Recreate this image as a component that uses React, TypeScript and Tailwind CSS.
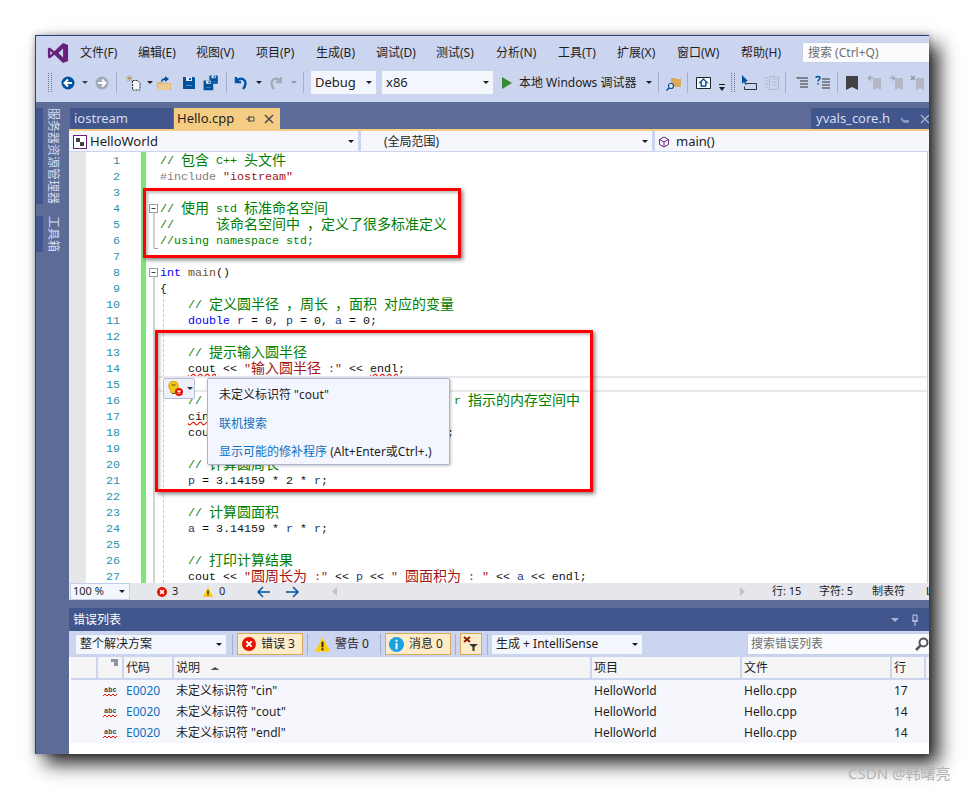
import React from "react"

const sans = "font-['Noto_Sans','Noto_Sans_CJK_SC',sans-serif]"

const C = "text-[#008000]"
const G = "text-[#808080]"
const S = "text-[#a31515]"
const K = "text-[#0000ff]"
const F = "text-[#74531f]"
const V = "text-[#1f377f]"
const N = "text-[#111111]"
const U = "text-[#111111] underline decoration-wavy decoration-[#e51400] underline-offset-[1px]"

type Seg = [string, string]

const lines: Seg[][] = [
  [[C, "// 包含 C++ 头文件"]],
  [[G, "#include "], [S, "\"iostream\""]],
  [],
  [[C, "// 使用 std 标准命名空间"]],
  [[C, "//      该命名空间中 ，定义了很多标准定义"]],
  [[C, "//using namespace std;"]],
  [],
  [[K, "int"], [N, " "], [F, "main"], [N, "()"]],
  [[N, "{"]],
  [[C, "    // 定义圆半径 ，周长 ，面积 对应的变量"]],
  [[K, "    double"], [N, " "], [V, "r"], [N, " = 0, "], [V, "p"], [N, " = 0, "], [V, "a"], [N, " = 0;"]],
  [],
  [[C, "    // 提示输入圆半径"]],
  [[N, "    "], [U, "cout"], [N, " << "], [S, "\"输入圆半径 :\""], [N, " << "], [U, "endl"], [N, ";"]],
  [],
  [[C, "    // 从键盘读取一个圆半径数据  ，存放到 r 指示的内存空间中"]],
  [[N, "    "], [U, "cin"], [N, " >> "], [V, "r"], [N, ";"]],
  [[N, "    cout << "], [S, "\"圆半径值为  : \""], [N, " << "], [V, "r"], [N, " << endl;"]],
  [],
  [[C, "    // 计算圆周长"]],
  [[V, "    p"], [N, " = 3.14159 * 2 * "], [V, "r"], [N, ";"]],
  [],
  [[C, "    // 计算圆面积"]],
  [[V, "    a"], [N, " = 3.14159 * "], [V, "r"], [N, " * "], [V, "r"], [N, ";"]],
  [],
  [[C, "    // 打印计算结果"]],
  [[N, "    cout << "], [S, "\"圆周长为 :\""], [N, " << "], [V, "p"], [N, " << "], [S, "\" 圆面积为 : \""], [N, " << "], [V, "a"], [N, " << endl;"]],
]

// cjk runs sit on a 14px grid, latin on a 7px grid
function CodeText({ text, cls }: { text: string; cls: string }) {
  const parts = text.split(/([\u4e00-\u9fff，]+)/)
  return (
    <span className={cls}>
      {parts.map((p, i) =>
        i % 2 === 1 ? (
          <span key={i} className="relative top-px text-[14px] leading-[0] font-['Noto_Sans_CJK_SC',sans-serif]">{p}</span>
        ) : (
          <span key={i}>{p}</span>
        ),
      )}
    </span>
  )
}

function Caret({ className = "", color = "#1e1e1e" }: { className?: string; color?: string }) {
  return (
    <svg width="6" height="3" viewBox="0 0 6 3" className={"shrink-0 " + className}>
      <path d="M0 0h6L3 3z" fill={color} />
    </svg>
  )
}

function Sep({ className = "" }: { className?: string }) {
  return <div className={"w-px h-[21px] shrink-0 bg-[#a4afcc] " + className} />
}

function Grip({ className = "" }: { className?: string }) {
  return <div className={"w-[4px] h-[19px] shrink-0 border-x border-dotted border-[#6b7690] " + className} />
}

function Ico({ className = "", children }: { className?: string; children: React.ReactNode }) {
  return (
    <svg width="16" height="16" viewBox="0 0 16 16" className={"shrink-0 " + className}>
      {children}
    </svg>
  )
}

function RoundArrow({ dir, fill, className }: { dir: "l" | "r"; fill: string; className?: string }) {
  return (
    <Ico className={className}>
      <circle cx="8" cy="8" r="6.5" fill={fill} />
      <path
        d={dir === "l" ? "M8 4.5 4.5 8 8 11.5M5 8h7" : "M8 4.5 11.5 8 8 11.5M11 8H4"}
        stroke="#fff"
        strokeWidth="2"
        fill="none"
      />
    </Ico>
  )
}

function Disk({ x = 0, y = 0, s = 1 }: { x?: number; y?: number; s?: number }) {
  return (
    <g transform={`translate(${x} ${y}) scale(${s})`}>
      <path d="M2 2h11l1 1v11H2z" fill="#00539c" />
      <path d="M5 2h6v4H5z" fill="#dfe5f6" />
      <path d="M8 3h2v2H8z" fill="#00539c" />
      <path d="M5 10h6v1H5z" fill="#5d8cbd" />
    </g>
  )
}

function Combo({ text, className, font = "text-[13px]" }: { text: string; className: string; font?: string }) {
  return (
    <div className={"flex items-center justify-between bg-[#f3f6fd] shrink-0 " + className}>
      <span className={"text-[#1e1e1e] truncate " + font}>{text}</span>
      <Caret />
    </div>
  )
}

function ErrIcon({ size = 14, className = "" }: { size?: number; className?: string }) {
  return (
    <svg width={size} height={size} viewBox="0 0 16 16" className={"shrink-0 " + className}>
      <circle cx="8" cy="8" r="8" fill="#e51400" />
      <path d="M5 5l6 6M11 5l-6 6" stroke="#fff" strokeWidth="2.4" />
    </svg>
  )
}

function WarnIcon({ size = 14, className = "" }: { size?: number; className?: string }) {
  return (
    <svg width={size} height={size} viewBox="0 0 16 16" className={"shrink-0 " + className}>
      <path d="M8 .5 16 15.5H0z" fill="#ffcc00" />
      <path d="M7 5h2v6H7zM7 12h2v2H7z" fill="#1e1e1e" />
    </svg>
  )
}

function MenuBar() {
  const items: [string, string][] = [
    ["文件(F)", "w-[58px]"],
    ["编辑(E)", "w-[58px]"],
    ["视图(V)", "w-[60px]"],
    ["项目(P)", "w-[60px]"],
    ["生成(B)", "w-[60px]"],
    ["调试(D)", "w-[60px]"],
    ["测试(S)", "w-[60px]"],
    ["分析(N)", "w-[62px]"],
    ["工具(T)", "w-[59px]"],
    ["扩展(X)", "w-[60px]"],
    ["窗口(W)", "w-[64px]"],
    ["帮助(H)", "w-[61px]"],
  ]
  return (
    <div className="h-[32px] flex items-center shrink-0 pt-px">
      <svg width="22" height="22" viewBox="0 0 24 24" className="ml-[11px] mr-[11px] shrink-0">
        <path d="M17.5 1 23 3.4v17.2L17.5 23 8 14l-5 4-2-1.2V7.2L3 6l5 4zM17.5 7l-5 5 5 5zM3.5 9.500v5l2.500-2.500z" fill="#68217a" fillRule="evenodd" />
      </svg>
      {items.map(([t, w]) => (
        <div key={t} className={"text-[12px] text-[#1e1e1e] shrink-0 " + w}>{t}</div>
      ))}
      <div className="flex-1 h-[21px] bg-[#fbfcfe] border border-[#c8d0e6] border-r-0 pl-[5px] flex items-center text-[12px] text-[#6d6d6d] whitespace-nowrap overflow-hidden">
        搜索 (Ctrl+Q)
      </div>
    </div>
  )
}

function ToolBar() {
  return (
    <div className="h-[34px] flex items-center shrink-0 pl-[12px] pb-[5px] overflow-hidden">
      <Grip />
      <RoundArrow dir="l" fill="#00539c" className="ml-[8px]" />
      <Caret className="ml-[6px]" color="#444" />
      <RoundArrow dir="r" fill="#a3a9b8" className="ml-[6px]" />
      <Sep className="ml-[6px]" />
      <Ico className="ml-[9px]">
        <path d="M6.500 5.500h5l2.500 2.500v7H6.500z" fill="#f3f5fb" stroke="#333" strokeDasharray="2 1" />
        <path d="M3.500 0v7M0 3.500h7M1 1l5 5M6 1 1 6" stroke="#b9801f" strokeWidth="1" strokeDasharray="1 .7" />
      </Ico>
      <Caret className="ml-[5px]" />
      <Ico className="ml-[3px]">
        <path d="M1 7h5l1 1h8v7H1z" fill="#dcb67a" />
        <path d="M3 9h12l-2 6H1z" fill="#eccb94" />
        <path d="M5 7c0-3 2-4 4-4V1l4 3-4 3V5C7 5 6 6 6 7z" fill="#00539c" />
      </Ico>
      <Ico className="ml-[9px]"><Disk /></Ico>
      <Ico className="ml-[6px]">
        <Disk x={5} y={-1} s={0.7} />
        <Disk x={-1} y={4} s={0.8} />
      </Ico>
      <Sep className="ml-[7px]" />
      <Ico className="ml-[6px]">
        <path d="M3 2v5h5M3.500 6.500C5 4 8 3 10.500 4.500 13 6 13.500 10 10 14" stroke="#00539c" strokeWidth="2.400" fill="none" />
      </Ico>
      <Caret className="ml-[7px]" />
      <Ico className="ml-[6px]">
        <path d="M13 2v5H8M12.500 6.500C11 4 8 3 5.500 4.500 3 6 2.500 10 6 14" stroke="#a3a9b8" strokeWidth="2.400" fill="none" />
      </Ico>
      <Caret className="ml-[7px]" color="#8f96a8" />
      <Sep className="ml-[6px]" />
      <Combo text="Debug" className="ml-[7px] w-[65px] h-[23px] px-[4px]" />
      <Combo text="x86" className="ml-[6px] w-[111px] h-[23px] px-[4px]" />
      <svg width="10" height="12" viewBox="0 0 10 12" className="ml-[9px] shrink-0">
        <path d="M0 0l10 6-10 6z" fill="#388a34" />
      </svg>
      <div className="ml-[7px] w-[121px] shrink-0 text-[12px] text-[#1e1e1e] whitespace-nowrap">本地 Windows 调试器</div>
      <Caret className="ml-[6px]" />
      <Sep className="ml-[6px]" />
      <Ico className="ml-[7px]">
        <path d="M5 3h4l1 1h5v8H5z" fill="#d9a95c" />
        <circle cx="5" cy="11" r="2.500" fill="#e8ecf8" stroke="#00539c" strokeWidth="1.200" />
        <path d="M3 13l-2.500 2.500" stroke="#00539c" strokeWidth="1.500" />
      </Ico>
      <Sep className="ml-[5px]" />
      <Ico className="ml-[8px]">
        <path d="M.5 2.500h14v11H.5z" fill="#f5f7fd" stroke="#222" />
        <path d="M7.500 4 4 7.500h1.200V11h4.600V7.500H11z" fill="none" stroke="#00539c" strokeWidth="1.300" />
      </Ico>
      <svg width="6" height="7" viewBox="0 0 6 7" className="ml-[7px] mt-[10px] shrink-0">
        <path d="M0 0h6v1H0zM0 3h6L3 7z" fill="#1e1e1e" />
      </svg>
      <Grip className="ml-[6px]" />
      <Ico className="ml-[6px]">
        <path d="M1 0v9l2-2 1.500 3L6 9.300 4.500 6.500 7 6z" fill="#00539c" />
        <path d="M5.500 8.500h10v6h-12v-3" fill="none" stroke="#333" />
      </Ico>
      <Ico className="ml-[7px]">
        <path d="M1 3h3M1 6h3M1 9h3M1 12h3" stroke="#b3b8c4" />
        <path d="M5.500 1.500h9v13h-9zM8 4h5M8 7h5M8 10h5" fill="none" stroke="#b3b8c4" />
      </Ico>
      <Sep className="ml-[5px]" />
      <Ico className="ml-[8px]">
        <path d="M3 3h11M6 6h8M6 9h8M6 12h8" stroke="#333" />
        <path d="M2 2h3l-1 2z" fill="#388a34" />
      </Ico>
      <Ico className="ml-[5px]">
        <path d="M7 4h8M7 7h8M7 10h8M7 13h8" stroke="#333" />
        <path d="M1 3c0-2 4-2 4 0 0 1.500-2 1.500-2 3.500M3 8v1.500" stroke="#00539c" strokeWidth="1.500" fill="none" />
      </Ico>
      <Sep className="ml-[6px]" />
      <Ico className="ml-[6px]"><path d="M2 1h12v14l-6-3-6 3z" fill="#424242" /></Ico>
      <Ico className="ml-[7px]">
        <path d="M6 3h8v12l-4-2-4 2z" fill="#b3b8c4" />
        <path d="M1 3h5M1 3l3-2.500M1 3l3 2.500" stroke="#8f96a8" fill="none" />
      </Ico>
      <Ico className="ml-[6px]">
        <path d="M6 3h8v12l-4-2-4 2z" fill="#b3b8c4" />
        <path d="M1 3h5M6 3 3 .5M6 3 3 5.500" stroke="#8f96a8" fill="none" />
      </Ico>
      <Ico className="ml-[5px]">
        <path d="M6 3h8v12l-4-2-4 2z" fill="#b3b8c4" />
        <path d="M1 1l4 4M5 1 1 5" stroke="#8f96a8" strokeWidth="1.500" />
      </Ico>
    </div>
  )
}

function TabStrip() {
  return (
    <div className="h-[29px] pt-[6px] flex shrink-0 border-b-2 border-[#f5cc84] ml-[33px]">
      <div className="w-[103px] ml-px bg-[#40568d] text-[#d5dcef] text-[13px] pl-[4px] leading-[21px] shrink-0">iostream</div>
      <div className="w-[106px] ml-px bg-[#f5cc84] text-[#1e1e1e] text-[13px] pl-[3px] leading-[21px] shrink-0 flex items-center">
        <span>Hello.cpp</span>
        <svg width="10" height="10" viewBox="0 0 10 10" className="ml-[12px] shrink-0">
          <path d="M0 5h3M3 2v6M3 3h5v4H3z" stroke="#4a4a4a" fill="none" />
        </svg>
        <svg width="10" height="10" viewBox="0 0 10 10" className="ml-[8px] shrink-0">
          <path d="M1 1l8 8M9 1 1 9" stroke="#4a4a4a" strokeWidth="1.500" />
        </svg>
      </div>
      <div className="flex-1" />
      <div className="w-[118px] bg-[#40568d] text-[#d5dcef] text-[13px] pl-[5px] leading-[21px] shrink-0 flex items-center">
        <span>yvals_core.h</span>
        <svg width="10" height="10" viewBox="0 0 10 10" className="ml-[10px] shrink-0">
          <path d="M1 3l3 3h5v3H4L1 6z" fill="#8b97b8" />
        </svg>
        <svg width="10" height="10" viewBox="0 0 10 10" className="ml-[10px] shrink-0">
          <path d="M1 1l8 8M9 1 1 9" stroke="#a9b4d0" strokeWidth="1.300" />
        </svg>
      </div>
    </div>
  )
}

function NavBar() {
  return (
    <div className="h-[21px] flex shrink-0 bg-[#ccd5f0] border-b border-[#ccd5f0] text-[#1e1e1e] text-[12px]">
      <div className="w-[289px] bg-[#f5f7fd] flex items-center pl-[4px] pr-[3px] pt-px">
        <svg width="14" height="14" viewBox="0 0 14 14" className="shrink-0">
          <rect x=".5" y=".5" width="13" height="13" fill="#fff" stroke="#68217a" />
          <path d="M3 3h4v4H3zM7 7h4v4H7z" fill="#424242" />
        </svg>
        <span className="ml-[3px] text-[13px]">HelloWorld</span>
        <Caret className="ml-auto mr-[1px]" />
      </div>
      <div className="w-[291px] ml-[3px] bg-[#f5f7fd] flex items-center pl-[23px] pr-[3px] pt-px">
        <span>(全局范围)</span>
        <Caret className="ml-auto mr-[1px]" />
      </div>
      <div className="flex-1 ml-[3px] bg-[#f5f7fd] flex items-center pl-[3px] pt-px">
        <svg width="12" height="12" viewBox="0 0 12 12" className="shrink-0">
          <path d="M6 1l4.500 2.500v5L6 11 1.500 8.500v-5zM1.500 3.500 6 6l4.500-2.500M6 6v5" fill="none" stroke="#68217a" />
        </svg>
        <span className="ml-[6px] text-[13px]">main()</span>
      </div>
    </div>
  )
}

function Editor() {
  return (
    <div className="h-[431px] flex shrink-0 overflow-hidden bg-white font-['Liberation_Mono','Noto_Sans_CJK_SC',monospace] text-[11.67px] leading-[16px]">
      <div className="w-[17px] bg-[#e6e7e8] shrink-0" />
      <div className="w-[34px] shrink-0 text-right text-[#2b91af]">
        {lines.map((_, i) => (
          <div key={i} className="h-[16px] pt-px">{i + 1}</div>
        ))}
      </div>
      <div className="w-[5px] ml-[21px] bg-[#78e678] shrink-0" />
      <svg width="13" height="431" viewBox="0 0 13 431" className="shrink-0">
        <g fill="#fff" stroke="#9a9a9a">
          <rect x="3.500" y="52.500" width="8" height="8" />
          <rect x="3.500" y="116.500" width="8" height="8" />
        </g>
        <path d="M5.500 56.500h4M5.500 120.500h4" stroke="#444" />
        <path d="M8 61v35.500h4M8 125v306" fill="none" stroke="#a5a5a5" />
      </svg>
      <div className="flex-1 relative pl-px whitespace-pre">
        <div className="absolute left-[4px] top-[142px] bottom-0 border-l border-dashed border-[#c8c8c8]" />
        {lines.map((segs, i) => (
          <div
            key={i}
            className={"h-[16px] relative " + (i === 14 ? "border-y-2 border-[#e8e8ec] -ml-px" : "pt-px")}
          >
            {segs.map(([cls, text], j) => (
              <CodeText key={j} cls={cls} text={text} />
            ))}
          </div>
        ))}
        <div className={"absolute left-[4px] top-[226px] w-[32px] h-[21px] bg-[#eef1fb] border border-[#b4bfdb] rounded-[2px] flex items-center pl-[3px] " + sans}>
          <svg width="17" height="17" viewBox="0 0 17 17" className="shrink-0">
            <path d="M6.500 1a5 5 0 0 1 3 9v2.500h-6V10a5 5 0 0 1 3-9z" fill="#f3c316" stroke="#c79a0a" strokeWidth=".6" />
            <path d="M4.500 5h4M5 13.500h3" stroke="#6b5a10" />
            <circle cx="12" cy="12" r="4" fill="#e51400" />
            <path d="M10.500 10.500l3 3M13.500 10.500l-3 3" stroke="#fff" strokeWidth="1.200" />
          </svg>
          <Caret className="ml-[3px]" color="#333" />
        </div>
        <div className={"absolute left-[48px] top-[226px] w-[243px] h-[87px] bg-[#f3f6fe] border border-[#a9b5d3] rounded-[2px] shadow-[1px_1px_3px_rgba(0,0,0,0.25)] pl-[11px] text-[12px] text-[#1e1e1e] leading-[16px] whitespace-nowrap " + sans}>
          <div className="mt-[8px]">未定义标识符 "cout"</div>
          <div className="mt-[13px] text-[#0e70c0]">联机搜索</div>
          <div className="mt-[12px]">
            <span className="text-[#0e70c0]">显示可能的修补程序</span> (Alt+Enter或Ctrl+.)
          </div>
        </div>
      </div>
      <div className="w-[2px] shrink-0 border-l border-[#c4c7d0] bg-[#f0f0f3]" />
    </div>
  )
}

function StatusBar() {
  return (
    <div className="h-[17px] flex items-center shrink-0 bg-[#e6e7ed] text-[11px] text-[#1e1e1e] whitespace-nowrap overflow-hidden">
      <div className="w-[60px] h-[17px] ml-px bg-[#f3f6fd] border border-[#c5cfea] flex items-center justify-between pl-[2px] pr-[4px] shrink-0 text-[11px]">
        <span>100 %</span>
        <Caret />
      </div>
      <ErrIcon size={10} className="ml-[27px]" />
      <span className="ml-[5px] w-[6px]">3</span>
      <WarnIcon size={10} className="ml-[25px]" />
      <span className="ml-[6px] w-[6px]">0</span>
      <svg width="14" height="12" viewBox="0 0 14 12" className="ml-[32px] shrink-0">
        <path d="M6 1 1 6l5 5M1 6h12" stroke="#00539c" strokeWidth="1.500" fill="none" />
      </svg>
      <svg width="14" height="12" viewBox="0 0 14 12" className="ml-[14px] shrink-0">
        <path d="M8 1l5 5-5 5M13 6H1" stroke="#00539c" strokeWidth="1.500" fill="none" />
      </svg>
      <svg width="5" height="9" viewBox="0 0 5 9" className="ml-[33px] shrink-0">
        <path d="M5 0v9L0 4.500z" fill="#c2c3c9" />
      </svg>
      <svg width="5" height="9" viewBox="0 0 5 9" className="ml-[403px] shrink-0">
        <path d="M0 0v9l5-4.500z" fill="#c2c3c9" />
      </svg>
      <span className="ml-[27px] w-[47px] shrink-0">行: 15</span>
      <span className="w-[53px] shrink-0">字符: 5</span>
      <span className="w-[54px] shrink-0">制表符</span>
      <span>L</span>
    </div>
  )
}

function ErrorList() {
  const rows = [
    ["cin", "17"],
    ["cout", "14"],
    ["endl", "14"],
  ]
  return (
    <div className="flex-1 flex flex-col bg-white text-[12px] text-[#1e1e1e] min-h-0">
      <div className="h-[8px] bg-[#5d6b99] shrink-0" />
      <div className="h-[23px] bg-[#40568d] shrink-0 flex items-center pl-[4px] text-white text-[12px]">
        <span>错误列表</span>
        <svg width="8" height="4" viewBox="0 0 8 4" className="ml-auto shrink-0">
          <path d="M0 0h8L4 4z" fill="#a9b6d6" />
        </svg>
        <svg width="8" height="12" viewBox="0 0 8 12" className="ml-[12px] mr-[10px] shrink-0">
          <path d="M2 1h4v6H2zM1 7h6M4 7v5" stroke="#c9d2e8" fill="none" />
        </svg>
      </div>
      <div className="h-[26px] bg-[#ccd5f0] shrink-0 flex items-center pl-[7px] whitespace-nowrap">
        <Combo text="整个解决方案" className="w-[150px] h-[19px] px-[4px]" font="text-[12px]" />
        <Sep className="ml-[6px]" />
        <div className="ml-[4px] w-[66px] h-[22px] bg-[#fdecc9] border border-[#d9a85f] flex items-center pl-[4px] shrink-0">
          <ErrIcon />
          <span className="ml-[5px]">错误 3</span>
        </div>
        <Sep className="ml-[4px]" />
        <WarnIcon size={15} className="ml-[7px]" />
        <span className="ml-[5px]">警告 0</span>
        <Sep className="ml-[11px]" />
        <div className="ml-[4px] w-[66px] h-[22px] bg-[#fdecc9] border border-[#d9a85f] flex items-center pl-[3px] shrink-0">
          <svg width="15" height="15" viewBox="0 0 16 16" className="shrink-0">
            <circle cx="8" cy="8" r="8" fill="#1ba1e2" />
            <path d="M7 3h2v2H7zM7 6.500h2V13H7z" fill="#fff" />
          </svg>
          <span className="ml-[5px]">消息 0</span>
        </div>
        <Sep className="ml-[4px]" />
        <div className="ml-[4px] w-[22px] h-[22px] bg-[#fdecc9] border border-[#d9a85f] flex items-center justify-center shrink-0">
          <svg width="16" height="16" viewBox="0 0 16 16">
            <path d="M1 1l6 5M7 1 1 6" stroke="#8a1c00" strokeWidth="2" />
            <path d="M6 8h9l-3.500 3v4h-2v-4z" fill="#333" />
          </svg>
        </div>
        <Sep className="ml-[5px]" />
        <Combo text="生成 + IntelliSense" className="ml-[4px] w-[150px] h-[19px] px-[4px]" font="text-[12px]" />
        <div className="ml-[105px] flex-1 h-[22px] bg-[#fafbfe] border border-[#c8d0e6] border-r-0 flex items-center pl-[3px] text-[#6d6d6d] overflow-hidden">
          <span>搜索错误列表</span>
          <svg width="14" height="14" viewBox="0 0 14 14" className="ml-auto shrink-0">
            <circle cx="8.500" cy="5.500" r="4" fill="none" stroke="#555" strokeWidth="2" />
            <path d="M5.500 8.500 1 13" stroke="#555" strokeWidth="2.500" />
          </svg>
        </div>
      </div>
      <div className="h-[23px] ml-[2px] bg-[#f5f5f5] border-b-2 border-[#ccd5f0] shrink-0 flex items-center">
        <div className="w-[25px] shrink-0" />
        <div className="w-[26px] h-full border-l-2 border-[#ccd5f0] flex justify-end pr-[4px] pt-[2px] shrink-0">
          <svg width="7" height="7" viewBox="0 0 7 7"><path d="M0 0h7v7H3V3H0z" fill="#8d94a6" /></svg>
        </div>
        <div className="w-[50px] h-full border-l-2 border-[#ccd5f0] pl-[2px] pt-px flex items-center shrink-0">代码</div>
        <div className="w-[418px] h-full border-l-2 border-[#ccd5f0] pl-[2px] pt-px flex items-center shrink-0">
          说明
          <Caret className="ml-[12px] scale-y-[-1] scale-x-150" color="#555" />
        </div>
        <div className="w-[150px] h-full border-l-2 border-[#ccd5f0] pl-[2px] pt-px flex items-center shrink-0">项目</div>
        <div className="w-[150px] h-full border-l-2 border-[#ccd5f0] pl-[2px] pt-px flex items-center shrink-0">文件</div>
        <div className="w-[36px] h-full border-x-2 border-[#ccd5f0] pl-[2px] pt-px flex items-center shrink-0">行</div>
      </div>
      {rows.map(([name, line]) => (
        <div key={name} className="h-[21px] ml-[2px] pt-px bg-[#f5f7fd] shrink-0 flex items-center">
          <div className="w-[32px] shrink-0" />
          <svg width="15" height="13" viewBox="0 0 15 13" className="shrink-0">
            <text x="1" y="7" fontSize="7" fontWeight="700" fill="#444" fontFamily="Liberation Mono">abc</text>
            <path d="M0 11l2-2 2 2 2-2 2 2 2-2 2 2 2-2" stroke="#e51400" fill="none" />
          </svg>
          <div className="w-[50px] ml-[8px] text-[#0e70c0] shrink-0">E0020</div>
          <div className="w-[418px] shrink-0">未定义标识符 "{name}"</div>
          <div className="w-[150px] shrink-0">HelloWorld</div>
          <div className="w-[150px] shrink-0">Hello.cpp</div>
          <div className="shrink-0">{line}</div>
        </div>
      ))}
    </div>
  )
}

export default function App() {
  return (
    <div className={"relative w-[964px] h-[789px] bg-white overflow-hidden pl-[35px] pt-[35px] " + sans}>
      <div className="relative w-[894px] h-[719px] flex flex-col bg-[#ccd5f0] border-t border-l border-[#2c4478] shadow-[10px_10px_18px_rgba(0,0,0,0.85),0_0_6px_rgba(0,0,0,0.3)]">
        <MenuBar />
        <ToolBar />
        <div className="flex-1 flex flex-col bg-[#5d6b99] min-h-0 relative overflow-hidden">
          <TabStrip />
          <div className="flex-1 flex min-h-0">
            <div className="w-[33px] shrink-0 flex flex-col relative">
              <div className="absolute left-0 top-[-23px] w-[7px] h-[96px] bg-[#40568d]" />
              <div className="absolute left-0 top-[85px] w-[7px] h-[36px] bg-[#40568d]" />
              <div className="absolute left-[9px] top-[-23px] text-[12px] leading-[16px] text-[#d5dcef] [writing-mode:vertical-rl] [text-orientation:sideways]">服务器资源管理器</div>
              <div className="absolute left-[9px] top-[85px] text-[12px] leading-[16px] text-[#d5dcef] [writing-mode:vertical-rl] [text-orientation:sideways]">工具箱</div>
            </div>
            <div className="flex-1 flex flex-col min-w-0">
              <NavBar />
              <Editor />
              <StatusBar />
              <ErrorList />
            </div>
          </div>
        </div>
        <div className="absolute left-[107px] top-[152px] w-[318px] h-[70px] border-[3px] border-[#ff0000] shadow-[2px_2px_4px_rgba(0,0,0,0.5),inset_2px_2px_3px_rgba(0,0,0,0.25)]" />
        <div className="absolute left-[119px] top-[294px] w-[438px] h-[162px] border-[3px] border-[#ff0000] shadow-[2px_2px_4px_rgba(0,0,0,0.5),inset_2px_2px_3px_rgba(0,0,0,0.25)]" />
      </div>
      <div className="absolute left-[848px] top-[763px] text-[15px] leading-[20px] text-[#b3b3b3] whitespace-nowrap">CSDN @韩曙亮</div>
    </div>
  )
}
